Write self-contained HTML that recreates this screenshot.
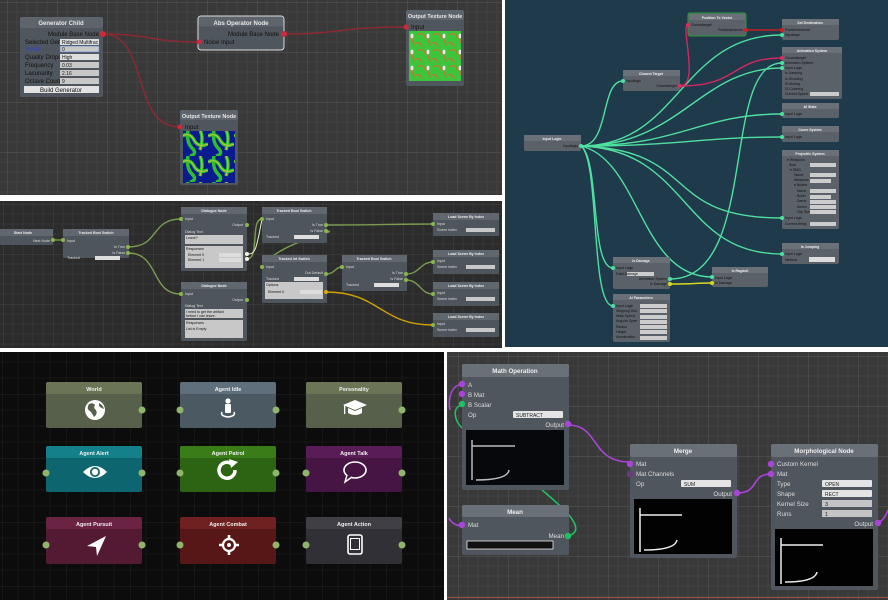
<!DOCTYPE html>
<html><head><meta charset="utf-8"><style>
html,body{margin:0;padding:0;background:#fff;width:888px;height:600px;overflow:hidden}
svg{display:block;font-family:"Liberation Sans",sans-serif}
</style></head><body>
<svg width="888" height="600" viewBox="0 0 888 600" xmlns="http://www.w3.org/2000/svg">
<defs>
<pattern id="g1" width="50" height="50" patternUnits="userSpaceOnUse" x="7" y="2">
<rect width="50" height="50" fill="#393939"/>
<path d="M10 0V50M20 0V50M30 0V50M40 0V50M0 10H50M0 20H50M0 30H50M0 40H50" stroke="#434343" stroke-width="1"/>
<path d="M0 0V50M0 0H50" stroke="#525252" stroke-width="1.2"/>
</pattern>
<pattern id="g2" width="50" height="50" patternUnits="userSpaceOnUse" x="3" y="4">
<rect width="50" height="50" fill="#2c2c2c"/>
<path d="M10 0V50M20 0V50M30 0V50M40 0V50M0 10H50M0 20H50M0 30H50M0 40H50" stroke="#363636" stroke-width="1"/>
<path d="M0 0V50M0 0H50" stroke="#444" stroke-width="1"/>
</pattern>
<pattern id="g3" width="64" height="64" patternUnits="userSpaceOnUse" x="2" y="10">
<rect width="64" height="64" fill="#0c0c0c"/>
<path d="M16 0V64M32 0V64M48 0V64M0 16H64M0 32H64M0 48H64" stroke="#161616" stroke-width="1"/>
<path d="M0 0V64M0 0H64" stroke="#222" stroke-width="1"/>
</pattern>
<pattern id="g4" width="50" height="50" patternUnits="userSpaceOnUse" x="8" y="6">
<rect width="50" height="50" fill="#393939"/>
<path d="M10 0V50M20 0V50M30 0V50M40 0V50M0 10H50M0 20H50M0 30H50M0 40H50" stroke="#434343" stroke-width="1"/>
<path d="M0 0V50M0 0H50" stroke="#525252" stroke-width="1.2"/>
</pattern>
<pattern id="tex1" width="26" height="26" patternUnits="userSpaceOnUse">
<rect width="26" height="26" fill="#0c1a90"/>
<path d="M0 6Q8 2 12 10T26 14M6 0Q4 12 10 18T8 26M18 0Q22 8 18 20" stroke="#2bbf2b" stroke-width="3.5" fill="none"/>
<path d="M0 6Q8 2 12 10T26 14M18 0Q22 8 18 20" stroke="#c8c840" stroke-width="1" fill="none"/>
</pattern>
<pattern id="tex2" width="16" height="16" patternUnits="userSpaceOnUse">
<rect width="16" height="16" fill="#3cc43a"/>
<path d="M1 3Q6 0 10 5T14 14M0 11Q4 9 6 15" stroke="#b08030" stroke-width="1.5" fill="none"/>
<ellipse cx="12" cy="4" rx="1.5" ry="2.5" fill="#e8e8e8"/>
</pattern>
</defs>

<rect x="0" y="0" width="502" height="195" fill="url(#g1)"/>
<rect x="505" y="0" width="383" height="347" fill="#1f3a4b"/>
<rect x="0" y="201" width="502" height="147" fill="url(#g2)"/>
<rect x="0" y="352" width="444" height="248" fill="url(#g3)"/>
<rect x="447" y="352" width="441" height="248" fill="url(#g4)"/>

<g fill="none" stroke="#8a2a34" stroke-width="1.5">
<path d="M103 34C150 34 150 42 198 42"/>
<path d="M103 34C150 34 130 127 180 127"/>
<path d="M284 34C340 34 340 27 406 27"/>
</g>
<g font-size="6" fill="#e8e8e8">
<rect x="20" y="17" width="83" height="80" rx="2" fill="#50565d"/>
<rect x="20" y="17" width="83" height="11" rx="2" fill="#5e646b"/>
<text x="61" y="25" text-anchor="middle" font-weight="bold">Generator Child</text>
<text x="99" y="36" text-anchor="end" fill="#111">Module Base Node</text>
<text x="25" y="44" fill="#111">Selected Gene</text><rect x="60" y="39" width="39" height="6" fill="#ddd"/><text x="62" y="44" fill="#111" font-size="5">Ridged Multifrac</text>
<text x="25" y="51" fill="#2a48d8">Seed</text><rect x="60" y="46" width="39" height="6" fill="#c8c8c8" stroke="#5577cc" stroke-width="0.6"/><text x="62" y="51" fill="#111" font-size="5">0</text>
<text x="25" y="59" fill="#111">Quality Dropd</text><rect x="60" y="54" width="39" height="6" fill="#ddd"/><text x="62" y="59" fill="#111" font-size="5">High</text>
<text x="25" y="67" fill="#111">Frequency</text><rect x="60" y="62" width="39" height="6" fill="#c8c8c8"/><text x="62" y="67" fill="#111" font-size="5">0.03</text>
<text x="25" y="75" fill="#111">Lacunarity</text><rect x="60" y="70" width="39" height="6" fill="#c8c8c8"/><text x="62" y="75" fill="#111" font-size="5">2.16</text>
<text x="25" y="83" fill="#111">Octave Count</text><rect x="60" y="78" width="39" height="6" fill="#c8c8c8"/><text x="62" y="83" fill="#111" font-size="5">9</text>
<rect x="24" y="86" width="75" height="7" fill="#e2e2e2"/><text x="61" y="92" text-anchor="middle" fill="#111">Build Generator</text>

<rect x="198" y="16" width="86" height="34" rx="3" fill="#50565d" stroke="#ddd" stroke-width="1"/>
<rect x="198.5" y="16.5" width="85" height="10" rx="3" fill="#5e646b"/>
<text x="241" y="25" text-anchor="middle" font-weight="bold">Abs Operator Node</text>
<text x="279" y="36" text-anchor="end" fill="#111">Module Base Node</text>
<text x="204" y="44" fill="#111">Noise Input</text>

<rect x="180" y="110" width="58" height="75" rx="2" fill="#50565d"/>
<rect x="180" y="110" width="58" height="10" rx="2" fill="#5e646b"/>
<text x="209" y="118" text-anchor="middle" font-weight="bold" font-size="5.5">Output Texture Node</text>
<text x="185" y="129" fill="#111">Input</text>
<rect x="183" y="131" width="52" height="52" fill="url(#tex1)"/>

<rect x="406" y="10" width="58" height="76" rx="2" fill="#50565d"/>
<rect x="406" y="10" width="58" height="10" rx="2" fill="#5e646b"/>
<text x="435" y="18" text-anchor="middle" font-weight="bold" font-size="5.5">Output Texture Node</text>
<text x="411" y="29" fill="#111">Input</text>
<rect x="409" y="31" width="52" height="50" fill="url(#tex2)"/>
</g>
<g fill="#d0283a">
<circle cx="103" cy="34" r="3"/><circle cx="199" cy="42" r="2.5"/><circle cx="284" cy="34" r="3"/>
<circle cx="180" cy="127" r="2.5"/><circle cx="406" cy="27" r="2.5"/>
</g>

<g fill="none" stroke="#4fe0a0" stroke-width="1.4">
<path d="M581 146C610 146 600 81 623 81"/>
<path d="M581 146C680 146 680 35 782 35"/>
<path d="M581 146C680 146 700 68 782 68"/>
<path d="M581 146C680 146 700 114 782 114"/>
<path d="M581 146C680 146 700 137 782 137"/>
<path d="M581 146C700 150 660 218 782 218"/>
<path d="M581 146C690 150 680 254 782 254"/>
<path d="M581 146C640 160 640 277 712 277"/>
<path d="M581 146C600 160 590 268 613 268"/>
<path d="M581 146C600 160 590 306 613 306"/>
<path d="M670 279C760 279 720 63 782 63"/>
</g>
<path d="M670 284C700 284 690 283 712 283" stroke="#d8d820" stroke-width="1.5" fill="none"/>
<g fill="none" stroke="#d02860" stroke-width="1.4">
<path d="M680 86C700 86 680 25 688 25"/>
<path d="M680 86C740 86 730 58 782 58"/>
</g>
<path d="M746 30L782 30" stroke="#c02020" stroke-width="1.5"/>
<g font-size="3.5" fill="#111">
<g fill="#5b6169">
<rect x="688" y="13" width="58" height="23" rx="2" stroke="#2a9a3a" stroke-width="1"/>
<rect x="782" y="19" width="57" height="21" rx="2"/>
<rect x="782" y="47" width="60" height="52" rx="2"/>
<rect x="623" y="70" width="57" height="21" rx="2"/>
<rect x="782" y="103" width="57" height="15" rx="2"/>
<rect x="782" y="126" width="57" height="16" rx="2"/>
<rect x="524" y="135" width="57" height="16" rx="2"/>
<rect x="782" y="150" width="57" height="79" rx="2"/>
<rect x="782" y="243" width="57" height="21" rx="2"/>
<rect x="613" y="257" width="57" height="32" rx="2"/>
<rect x="712" y="267" width="56" height="20" rx="2"/>
<rect x="613" y="294" width="57" height="48" rx="2"/>
</g>
<g fill="#6a7078">
<rect x="689" y="14" width="56" height="6"/><rect x="782" y="19" width="57" height="6"/><rect x="782" y="47" width="60" height="6"/>
<rect x="623" y="70" width="57" height="6"/><rect x="782" y="103" width="57" height="6"/><rect x="782" y="126" width="57" height="6"/>
<rect x="524" y="135" width="57" height="6"/><rect x="782" y="150" width="57" height="6"/><rect x="782" y="243" width="57" height="6"/>
<rect x="613" y="257" width="57" height="6"/><rect x="712" y="267" width="56" height="6"/><rect x="613" y="294" width="57" height="6"/>
</g>
<g fill="#eee" font-weight="bold" text-anchor="middle">
<text x="717" y="19">Position To Vector</text><text x="810" y="24">Set Destination</text><text x="812" y="52">Animation System</text>
<text x="651" y="75">Closest Target</text><text x="810" y="108">AI State</text><text x="810" y="131">Cover System</text>
<text x="552" y="140">Input Logic</text><text x="810" y="155">Projectile System</text><text x="810" y="248">Is Jumping</text>
<text x="641" y="262">Is Damage</text><text x="740" y="272">Is Ragdoll</text><text x="641" y="299">AI Parameters</text>
</g>
<text x="691" y="26">Closesttarget</text><text x="743" y="31" text-anchor="end">Positiontovector</text>
<text x="785" y="31">Positiontovector</text><text x="785" y="36">Inputlogic</text>
<text x="785" y="59">Closesttarget</text><text x="785" y="64">Animation System</text><text x="785" y="69">Input Logic</text>
<text x="785" y="74">Is Jumping</text><text x="785" y="80">Is Shooting</text><text x="785" y="85">IS Aiming</text><text x="785" y="90">IS Covering</text><text x="785" y="95">Current Speed</text>
<rect x="810" y="92" width="29" height="4" fill="#ccc"/>
<text x="626" y="82">Inputlogic</text><text x="677" y="87" text-anchor="end">Closesttarget</text>
<text x="785" y="115">Input Logic</text><text x="785" y="138">Input Logic</text><text x="578" y="147" text-anchor="end">Inputlogic</text>
<text x="787" y="161">▾ Weapons</text><text x="789" y="166">Size</text><text x="790" y="171">▾ SMG</text><text x="794" y="176">Name</text><text x="794" y="181">Weapons</text><text x="794" y="186">▾ Bullets</text>
<text x="797" y="192">Name</text><text x="797" y="197">Bullet</text><text x="797" y="202">Dama</text><text x="797" y="208">Ammo</text><text x="797" y="213">Clip Size</text>
<text x="785" y="219">Input Logic</text><text x="785" y="225">Current Weap</text>
<g fill="#ccc"><rect x="810" y="163" width="26" height="4"/><rect x="810" y="173" width="26" height="4"/><rect x="810" y="179" width="21" height="4"/><rect x="810" y="189" width="26" height="4"/><rect x="810" y="195" width="21" height="4"/><rect x="810" y="200" width="26" height="4"/><rect x="810" y="205" width="26" height="4"/><rect x="810" y="210" width="26" height="4"/><rect x="810" y="222" width="26" height="4"/><rect x="809" y="257" width="26" height="5" fill="#ddd"/>
<rect x="627" y="272" width="27" height="4"/><rect x="640" y="304" width="27" height="4"/><rect x="640" y="309" width="27" height="4"/><rect x="640" y="315" width="27" height="4"/><rect x="640" y="320" width="27" height="4"/><rect x="640" y="325" width="27" height="4"/><rect x="640" y="330" width="27" height="4"/><rect x="640" y="336" width="27" height="4"/></g>
<text x="785" y="255">Input Logic</text><text x="785" y="261">Method</text>
<text x="616" y="269">Input Logic</text><text x="616" y="275">Fatal Damage</text><text x="667" y="280" text-anchor="end">Animation System</text><text x="667" y="285" text-anchor="end">Is Damage</text>
<text x="715" y="279">Input Logic</text><text x="715" y="284">Is Damage</text>
<text x="616" y="307">Input Logic</text><text x="616" y="312">Stopping Dist</text><text x="616" y="317">Walk Speed</text><text x="616" y="322">Angular Spee</text><text x="616" y="328">Radius</text><text x="616" y="333">Height</text><text x="616" y="338">Acceleration</text>
</g>
<g fill="#4fe0a0">
<circle cx="581" cy="146" r="2"/><circle cx="623" cy="81" r="2"/><circle cx="782" cy="35" r="2"/><circle cx="782" cy="63" r="2"/><circle cx="782" cy="68" r="2"/>
<circle cx="782" cy="114" r="2"/><circle cx="782" cy="137" r="2"/><circle cx="782" cy="218" r="2"/><circle cx="782" cy="254" r="2"/>
<circle cx="613" cy="268" r="2"/><circle cx="613" cy="306" r="2"/><circle cx="670" cy="279" r="2"/><circle cx="712" cy="277" r="2"/>
</g>
<g fill="#e02a5a"><circle cx="688" cy="25" r="2"/><circle cx="680" cy="86" r="2"/><circle cx="782" cy="58" r="2"/></g>
<circle cx="746" cy="30" r="2" fill="#d02020"/><circle cx="782" cy="30" r="2" fill="#d02020"/>
<circle cx="670" cy="284" r="2" fill="#d8d820"/><circle cx="712" cy="283" r="2" fill="#d8d820"/>

<g fill="none" stroke="#7a9a50" stroke-width="1.4">
<path d="M53 240L63 240"/>
<path d="M128 247C160 247 150 219 181 219"/>
<path d="M128 253C160 253 150 294 181 294"/>
<path d="M247 259C260 259 250 219 262 219"/>
<path d="M326 225C370 225 400 224 433 224"/>
<path d="M326 231C345 231 280 240 262 267"/>
<path d="M326 274C335 274 335 267 342 267"/>
<path d="M406 274C420 274 420 262 433 262"/>
<path d="M406 280C420 280 420 294 433 294"/>
</g>
<path d="M247 254C255 254 256 252 262 219" stroke="#e8e8c8" stroke-width="1" fill="none"/>
<path d="M326 292C380 292 380 325 433 325" stroke="#d0a000" stroke-width="1.4" fill="none"/>
<g font-size="3.6" fill="#111">
<g fill="#4f555c">
<rect x="0" y="229" width="53" height="16" rx="1"/><rect x="63" y="229" width="66" height="29" rx="1"/>
<rect x="181" y="207" width="66" height="64" rx="1"/><rect x="181" y="282" width="66" height="59" rx="1"/>
<rect x="262" y="207" width="65" height="36" rx="1"/><rect x="262" y="255" width="65" height="48" rx="1"/>
<rect x="342" y="255" width="65" height="36" rx="1"/>
<rect x="433" y="213" width="66" height="23" rx="1"/><rect x="433" y="250" width="66" height="24" rx="1"/>
<rect x="433" y="282" width="66" height="24" rx="1"/><rect x="433" y="313" width="66" height="24" rx="1"/>
</g>
<g fill="#61676e">
<rect x="0" y="229" width="53" height="7"/><rect x="63" y="229" width="66" height="7"/><rect x="181" y="207" width="66" height="7"/><rect x="181" y="282" width="66" height="7"/>
<rect x="262" y="207" width="65" height="7"/><rect x="262" y="255" width="65" height="7"/><rect x="342" y="255" width="65" height="7"/>
<rect x="433" y="213" width="66" height="7"/><rect x="433" y="250" width="66" height="7"/><rect x="433" y="282" width="66" height="7"/><rect x="433" y="313" width="66" height="7"/>
</g>
<g fill="#eee" font-weight="bold" text-anchor="middle">
<text x="23" y="234">Start Node</text><text x="96" y="234">Tracked Bool Switch</text><text x="214" y="212">Dialogue Node</text><text x="214" y="287">Dialogue Node</text>
<text x="294" y="212">Tracked Bool Switch</text><text x="294" y="260">Tracked Int Switch</text><text x="374" y="260">Tracked Bool Switch</text>
<text x="466" y="218">Load Scene By Index</text><text x="466" y="255">Load Scene By Index</text><text x="466" y="287">Load Scene By Index</text><text x="466" y="318">Load Scene By Index</text>
</g>
<g fill="#ddd">
<text x="50" y="242" text-anchor="end">Next Node</text><text x="67" y="242">Input</text><text x="125" y="248" text-anchor="end">Is True</text><text x="125" y="254" text-anchor="end">Is False</text><text x="67" y="259">Tracked</text>
<text x="185" y="220">Input</text><text x="243" y="226" text-anchor="end">Output</text><text x="185" y="233">Dialog Text</text>
<text x="185" y="295">Input</text><text x="243" y="301" text-anchor="end">Output</text><text x="185" y="307">Dialog Text</text>
<text x="266" y="220">Input</text><text x="323" y="226" text-anchor="end">Is True</text><text x="323" y="232" text-anchor="end">Is False</text><text x="266" y="238">Tracked</text>
<text x="266" y="268">Input</text><text x="323" y="274" text-anchor="end">Out Default</text><text x="266" y="280">Tracked</text>
<text x="346" y="268">Input</text><text x="403" y="274" text-anchor="end">Is True</text><text x="403" y="280" text-anchor="end">Is False</text><text x="346" y="286">Tracked</text>
<text x="437" y="225">Input</text><text x="437" y="231">Scene Index</text><text x="437" y="262">Input</text><text x="437" y="268">Scene Index</text>
<text x="437" y="294">Input</text><text x="437" y="300">Scene Index</text><text x="437" y="325">Input</text><text x="437" y="331">Scene Index</text>
</g>
<g fill="#c8c8c8">
<rect x="185" y="235" width="58" height="9"/><rect x="185" y="246" width="58" height="22"/>
<rect x="185" y="309" width="58" height="9"/><rect x="185" y="320" width="58" height="18"/>
<rect x="265" y="282" width="58" height="17"/>
<rect x="95" y="256" width="25" height="4" fill="#ddd"/><rect x="294" y="235" width="25" height="4" fill="#ddd"/><rect x="294" y="277" width="25" height="4" fill="#ddd"/><rect x="374" y="283" width="25" height="4" fill="#ddd"/>
<rect x="466" y="228" width="29" height="4"/><rect x="466" y="265" width="29" height="4"/><rect x="466" y="297" width="29" height="4"/><rect x="466" y="328" width="29" height="4"/>
</g>
<text x="186" y="239">Leave?</text><text x="186" y="250">Responses</text><text x="188" y="256">Element 0</text><text x="188" y="261">Element 1</text>
<rect x="219" y="253" width="22" height="4" fill="#ddd"/><rect x="219" y="258" width="22" height="4" fill="#ddd"/>
<text x="186" y="313">I need to get the artifact</text><text x="186" y="317">before I can leave.</text><text x="186" y="324">Responses</text><text x="186" y="330">List is Empty</text>
<text x="266" y="286">Options</text><text x="268" y="293">Element 0</text><rect x="300" y="290" width="22" height="4" fill="#ddd"/>
</g>
<g fill="#8ab54e">
<circle cx="53" cy="240" r="2"/><circle cx="63" cy="240" r="2"/><circle cx="128" cy="247" r="2"/><circle cx="128" cy="253" r="2"/>
<circle cx="181" cy="219" r="2"/><circle cx="247" cy="225" r="2"/><circle cx="181" cy="294" r="2"/><circle cx="247" cy="300" r="2"/>
<circle cx="262" cy="219" r="2"/><circle cx="326" cy="225" r="2"/><circle cx="326" cy="231" r="2"/><circle cx="262" cy="267" r="2"/><circle cx="326" cy="274" r="2"/>
<circle cx="342" cy="267" r="2"/><circle cx="406" cy="274" r="2"/><circle cx="406" cy="280" r="2"/>
<circle cx="433" cy="224" r="2"/><circle cx="433" cy="262" r="2"/><circle cx="433" cy="294" r="2"/><circle cx="433" cy="325" r="2"/>
</g>
<circle cx="247" cy="254" r="2" fill="#f4f4e0"/><circle cx="247" cy="259" r="2" fill="#f4f4e0"/><circle cx="326" cy="292" r="2" fill="#e0a800"/>

<g font-size="5.5" font-weight="bold" fill="#eee" text-anchor="middle">
<rect x="46" y="382" width="96" height="46" rx="2" fill="#57604a"/><rect x="46" y="382" width="96" height="12" rx="2" fill="#6b7556"/><text x="94" y="391">World</text>
<rect x="180" y="382" width="96" height="46" rx="2" fill="#4b5963"/><rect x="180" y="382" width="96" height="12" rx="2" fill="#5f707c"/><text x="228" y="391">Agent Idle</text>
<rect x="306" y="382" width="96" height="46" rx="2" fill="#57604a"/><rect x="306" y="382" width="96" height="12" rx="2" fill="#6b7556"/><text x="354" y="391">Personality</text>
<rect x="46" y="446" width="96" height="46" rx="2" fill="#0d6570"/><rect x="46" y="446" width="96" height="12" rx="2" fill="#13808a"/><text x="94" y="455">Agent Alert</text>
<rect x="180" y="446" width="96" height="46" rx="2" fill="#2c6414"/><rect x="180" y="446" width="96" height="12" rx="2" fill="#3a7d18"/><text x="228" y="455">Agent Patrol</text>
<rect x="306" y="446" width="96" height="46" rx="2" fill="#461543"/><rect x="306" y="446" width="96" height="12" rx="2" fill="#5a1c56"/><text x="354" y="455">Agent Talk</text>
<rect x="46" y="517" width="96" height="47" rx="2" fill="#551a33"/><rect x="46" y="517" width="96" height="12" rx="2" fill="#6b2344"/><text x="94" y="526">Agent Pursuit</text>
<rect x="180" y="517" width="96" height="47" rx="2" fill="#581717"/><rect x="180" y="517" width="96" height="12" rx="2" fill="#6f2020"/><text x="228" y="526">Agent Combat</text>
<rect x="306" y="517" width="96" height="47" rx="2" fill="#313036"/><rect x="306" y="517" width="96" height="12" rx="2" fill="#413f46"/><text x="354" y="526">Agent Action</text>
</g>
<g fill="#fff">
<circle cx="95" cy="410" r="10"/>
<path d="M89 404Q93 402 95 405Q93 408 96 410Q98 414 94 417Q92 413 90 411Q86 409 89 404Z M99 403Q103 405 104 409Q101 408 99 406Z" fill="#57604a"/>
<circle cx="228" cy="401" r="2.6"/><rect x="225" y="404" width="6" height="9" rx="1"/>
<path d="M222 412Q220 416 228 417Q236 416 234 412" stroke="#fff" stroke-width="1.6" fill="none"/>
<path d="M343 405L355 400L367 405L355 410Z"/><path d="M348 408V413Q355 417 362 413V408L355 411Z"/><rect x="344" y="405" width="1.3" height="9"/>
<path d="M83 472Q95 460 107 472Q95 484 83 472Z"/><circle cx="95" cy="472" r="5" fill="#0d6570"/><circle cx="95" cy="472" r="3.2"/>
<path d="M235 470A8 8 0 1 1 232 464" stroke="#fff" stroke-width="3.5" fill="none"/><path d="M229 459L238 462L231 468Z"/>
<ellipse cx="355" cy="470" rx="11" ry="8" fill="none" stroke="#fff" stroke-width="1.6"/><path d="M347 475L345 482L352 477" fill="#461543" stroke="#fff" stroke-width="1.4"/>
<path d="M106 536L87 546L96 547L97 556Z"/>
<circle cx="229" cy="545" r="6" fill="none" stroke="#fff" stroke-width="2.2"/><circle cx="229" cy="545" r="2"/>
<path d="M229 535V539M229 551V555M219 545H223M235 545H239" stroke="#fff" stroke-width="2.6"/>
<rect x="348" y="535" width="14" height="19" rx="2" fill="none" stroke="#fff" stroke-width="1.6"/><rect x="350" y="538" width="10" height="12" fill="#fff"/><rect x="351" y="539" width="8" height="10" fill="#313036"/>
</g>
<g fill="#8fb56a">
<circle cx="142" cy="410" r="3.5"/><circle cx="180" cy="410" r="3.5"/><circle cx="276" cy="410" r="3.5"/><circle cx="402" cy="410" r="3.5"/>
<circle cx="46" cy="473" r="3.5"/><circle cx="142" cy="473" r="3.5"/><circle cx="180" cy="473" r="3.5"/><circle cx="276" cy="473" r="3.5"/><circle cx="306" cy="473" r="3.5"/><circle cx="402" cy="473" r="3.5"/>
<circle cx="46" cy="545" r="3.5"/><circle cx="142" cy="545" r="3.5"/><circle cx="180" cy="545" r="3.5"/><circle cx="276" cy="545" r="3.5"/><circle cx="306" cy="545" r="3.5"/><circle cx="402" cy="545" r="3.5"/>
</g>

<g fill="none" stroke-width="1.6">
<path d="M462 384C450 386 448 400 450 410" stroke="#a845d8"/>
<path d="M462 405C452 407 454 420 462 428" stroke="#20c060"/>
<path d="M568 425C600 425 590 462 630 462" stroke="#a845d8"/>
<path d="M737 493C760 493 750 474 771 474" stroke="#a845d8"/>
<path d="M878 523C884 520 886 515 888 510" stroke="#a845d8"/>
<path d="M449 518Q452 525 462 526" stroke="#a845d8"/>
<path d="M542 490C560 505 590 530 568 536" stroke="#20c060"/>
</g>
<g font-size="6.2" fill="#ddd">
<rect x="462" y="364" width="107" height="126" rx="2" fill="#50565d"/><rect x="462" y="364" width="107" height="13" rx="2" fill="#6a7078"/>
<text x="515" y="373" text-anchor="middle" font-weight="bold" fill="#eee">Math Operation</text>
<text x="468" y="387">A</text><text x="468" y="397">B Mat</text><text x="468" y="407">B Scalar</text><text x="468" y="417">Op</text>
<rect x="513" y="411" width="50" height="7" rx="1" fill="#e4e4e4"/><text x="516" y="417" font-size="5" fill="#222">SUBTRACT</text>
<text x="564" y="427" text-anchor="end">Output</text>
<rect x="466" y="430" width="98" height="55" fill="#06080c"/>
<path d="M472 440V480M472 446H515M476 480Q508 480 509 470" stroke="#bbb" fill="none" stroke-width="1.5"/>

<rect x="462" y="505" width="107" height="50" rx="2" fill="#50565d"/><rect x="462" y="505" width="107" height="12" rx="2" fill="#6a7078"/>
<text x="515" y="514" text-anchor="middle" font-weight="bold" fill="#eee">Mean</text>
<text x="468" y="527">Mat</text><text x="564" y="538" text-anchor="end">Mean</text>
<rect x="467" y="541" width="86" height="8" fill="#111" stroke="#eee" stroke-width="0.8"/>

<rect x="630" y="444" width="107" height="114" rx="2" fill="#50565d"/><rect x="630" y="444" width="107" height="13" rx="2" fill="#6a7078"/>
<text x="683" y="453" text-anchor="middle" font-weight="bold" fill="#eee">Merge</text>
<text x="636" y="466">Mat</text><text x="636" y="476">Mat Channels</text><text x="636" y="486">Op</text>
<rect x="681" y="480" width="50" height="7" rx="1" fill="#e4e4e4"/><text x="684" y="486" font-size="5" fill="#222">SUM</text>
<text x="732" y="496" text-anchor="end">Output</text>
<rect x="634" y="499" width="98" height="55" fill="#020202"/>
<path d="M640 508V552M640 515H682M644 550Q675 550 677 540" stroke="#eee" fill="none" stroke-width="1.5"/>

<rect x="771" y="444" width="107" height="146" rx="2" fill="#50565d"/><rect x="771" y="444" width="107" height="13" rx="2" fill="#6a7078"/>
<text x="824" y="453" text-anchor="middle" font-weight="bold" fill="#eee">Morphological Node</text>
<text x="777" y="466">Custom Kernel</text><text x="777" y="476">Mat</text><text x="777" y="486">Type</text><text x="777" y="496">Shape</text><text x="777" y="506">Kernel Size</text><text x="777" y="516">Runs</text>
<rect x="822" y="480" width="50" height="7" rx="1" fill="#e4e4e4"/><text x="825" y="486" font-size="5" fill="#222">OPEN</text>
<rect x="822" y="490" width="50" height="7" rx="1" fill="#e4e4e4"/><text x="825" y="496" font-size="5" fill="#222">RECT</text>
<rect x="822" y="500" width="50" height="7" fill="#c4c4c4"/><text x="825" y="506" font-size="5.5" fill="#222">3</text>
<rect x="822" y="510" width="50" height="7" fill="#c4c4c4"/><text x="825" y="516" font-size="5.5" fill="#222">1</text>
<text x="873" y="526" text-anchor="end">Output</text>
<rect x="775" y="529" width="98" height="57" fill="#020202"/>
<path d="M781 538V584M781 545H823M785 582Q815 582 817 572" stroke="#eee" fill="none" stroke-width="1.5"/>
</g>
<g fill="#a845d8">
<circle cx="462" cy="384" r="3.2"/><circle cx="462" cy="394" r="3.2"/><circle cx="568" cy="424" r="3.2"/><circle cx="462" cy="525" r="3.2"/>
<circle cx="630" cy="464" r="3.2"/><circle cx="630" cy="474" r="3.2" fill="#6a3a80"/><circle cx="737" cy="493" r="3.2"/>
<circle cx="771" cy="464" r="3.2"/><circle cx="771" cy="474" r="3.2"/><circle cx="878" cy="523" r="3.2"/>
</g>
<circle cx="462" cy="404" r="3.2" fill="#20c060"/><circle cx="568" cy="536" r="3.2" fill="#20c060"/>
<rect x="447" y="597" width="441" height="1" fill="#a05040"/>
</svg>
</body></html>
